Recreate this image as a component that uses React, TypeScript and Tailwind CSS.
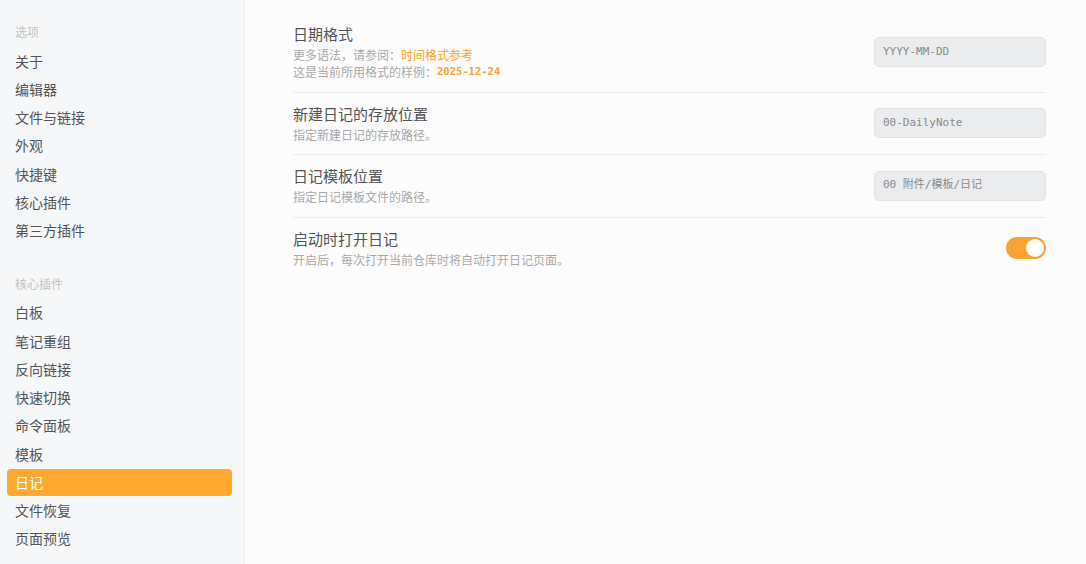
import React from "react";

const cjk = '"Noto Sans CJK SC", "Noto Sans", sans-serif';
const mono = '"DejaVu Sans Mono", "Noto Sans CJK SC", monospace';

const group1 = ["关于", "编辑器", "文件与链接", "外观", "快捷键", "核心插件", "第三方插件"];
const group2 = ["白板", "笔记重组", "反向链接", "快速切换", "命令面板", "模板", "日记", "文件恢复", "页面预览"];

function Item({ label, active }: { label: string; active?: boolean }) {
  return (
    <div className="h-[28.25px] py-px">
      <div
        className={
          "h-full flex items-center px-[8px] rounded-[4px] text-[14px] " +
          (active ? "bg-[#ffa931] text-white" : "text-[#555555]")
        }
      >
        {label}
      </div>
    </div>
  );
}

function Row({
  title,
  children,
  right,
  last,
}: {
  title: string;
  children: React.ReactNode;
  right: React.ReactNode;
  last?: boolean;
}) {
  return (
    <div
      className={
        "flex items-center justify-between pt-[11px] pb-[11.5px] " +
        (last ? "" : "border-b border-[#ececec]")
      }
    >
      <div className="flex flex-col">
        <div className="text-[15px] leading-[20px] text-[#555555]">{title}</div>
        <div className="mt-[2px] text-[12px] leading-[17px] text-[#a9a9a9]">{children}</div>
      </div>
      {right}
    </div>
  );
}

function Input({ value }: { value: string }) {
  return (
    <div
      className="w-[172px] h-[30px] flex items-center px-[8px] rounded-[5px] bg-[#ebecee] border border-[#e2e3e5] text-[11px] text-[#8a8a8a]"
      style={{ fontFamily: mono }}
    >
      {value}
    </div>
  );
}

export default function App() {
  return (
    <div className="w-[1086px] h-[564px] flex bg-[#fcfcfc] overflow-hidden" style={{ fontFamily: cjk }}>
      <div className="w-[245px] shrink-0 h-full bg-[#f6f7f9] border-r border-[#ebebeb] pl-[7px] pr-[12px] pt-[22px]">
        <div className="h-[20px] flex items-center px-[8px] text-[12px] text-[#c2c2c2] mb-[5px]">选项</div>
        {group1.map((g) => (
          <Item key={g} label={g} />
        ))}
        <div className="h-[20px] flex items-center px-[8px] text-[12px] text-[#c2c2c2] mt-[29px] mb-[5px]">核心插件</div>
        {group2.map((g) => (
          <Item key={g} label={g} active={g === "日记"} />
        ))}
      </div>
      <div className="flex-1 pl-[48px] pr-[40px] pt-[13px]">
        <Row title="日期格式" right={<Input value="YYYY-MM-DD" />}>
          <div className="h-[17px] flex items-center">
            更多语法，请参阅：<span className="text-[#ffa032]">时间格式参考</span>
          </div>
          <div className="h-[17px] flex items-center">
            这是当前所用格式的样例：
            <span className="text-[#ffa032] font-bold text-[10.5px] leading-[17px]" style={{ fontFamily: mono }}>
              2025-12-24
            </span>
          </div>
        </Row>
        <Row title="新建日记的存放位置" right={<Input value="00-DailyNote" />}>
          指定新建日记的存放路径。
        </Row>
        <Row title="日记模板位置" right={<Input value="00 附件/模板/日记" />}>
          指定日记模板文件的路径。
        </Row>
        <Row
          title="启动时打开日记"
          last
          right={
            <div className="w-[40px] h-[22px] rounded-full bg-[#f9a334] flex items-center justify-end pr-[2px]">
              <div className="w-[18px] h-[18px] rounded-full bg-white" />
            </div>
          }
        >
          开启后，每次打开当前仓库时将自动打开日记页面。
        </Row>
      </div>
    </div>
  );
}
